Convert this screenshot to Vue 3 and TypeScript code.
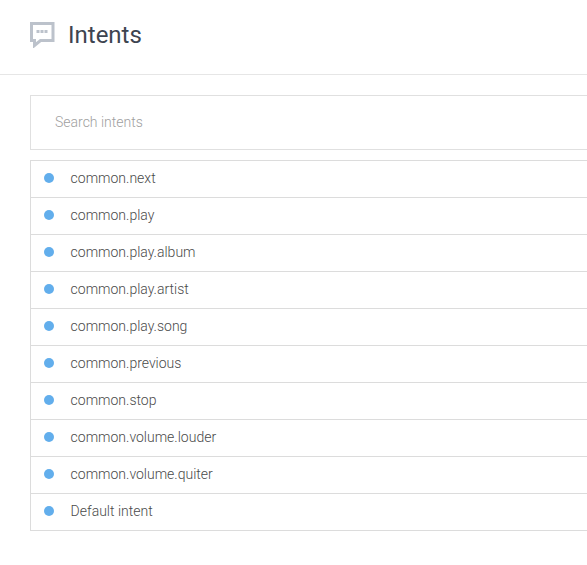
<script setup lang="ts">
const intents: string[] = [
  'common.next',
  'common.play',
  'common.play.album',
  'common.play.artist',
  'common.play.song',
  'common.previous',
  'common.stop',
  'common.volume.louder',
  'common.volume.quiter',
  'Default intent',
]
</script>

<template>
  <div class="page">
    <header class="header">
      <svg class="icon" width="26" height="26" viewBox="0 0 26 26" aria-hidden="true">
        <path d="M2.500 1.500H24V18.500H11.500L5.500 23.500V18.500H2.500Z" fill="none" stroke="#bcc2cb" stroke-width="3" stroke-linejoin="miter" />
        <rect x="7.500" y="8" width="3" height="3" fill="#bcc2cb" />
        <rect x="11.500" y="8" width="3" height="3" fill="#bcc2cb" />
        <rect x="15.500" y="8" width="3" height="3" fill="#bcc2cb" />
      </svg>
      <h1 class="title">Intents</h1>
    </header>
    <main class="content">
      <input class="search" type="text" placeholder="Search intents" />
      <ul class="list">
        <li v-for="intent in intents" :key="intent" class="row">
          <span class="dot"></span>
          <span class="name">{{ intent }}</span>
        </li>
      </ul>
    </main>
  </div>
</template>

<style>
html, body {
  margin: 0;
  overflow: hidden;
  background: #fff;
}
</style>

<style scoped>
.page {
  width: 587px;
  height: 565px;
  overflow: hidden;
  font-family: Roboto, sans-serif;
  color: #333a45;
}
.header {
  height: 75px;
  box-sizing: border-box;
  border-bottom: 1px solid #e6e6e6;
  padding-left: 29px;
  display: flex;
  align-items: center;
  padding-bottom: 4px;
  gap: 13px;
  width: 100%;
}
.icon {
  flex: none;
}
.title {
  margin: 0;
  font-size: 24px;
  font-weight: 400;
  line-height: 30px;
  color: #3d4450;
}
.content {
  padding: 20px 0 0 30px;
  width: 700px;
}
.search {
  display: block;
  width: 100%;
  box-sizing: border-box;
  height: 55px;
  border: 1px solid #e0e0e0;
  padding: 0 24px 2px;
  margin: 0 0 10px;
  font-family: inherit;
  font-size: 14px;
  font-weight: 300;
  outline: none;
  background: #fff;
}
.search::placeholder {
  color: #a0a0a0;
}
.list {
  list-style: none;
  margin: 0;
  padding: 0;
  border: 1px solid #dcdcdc;
  border-bottom: 0;
}
.row {
  height: 37px;
  box-sizing: border-box;
  border-bottom: 1px solid #dcdcdc;
  display: flex;
  align-items: center;
  padding-left: 13px;
  padding-bottom: 2px;
  font-size: 14px;
  font-weight: 300;
  color: #4a4a4a;
}
.dot {
  width: 10px;
  height: 10px;
  border-radius: 50%;
  background: #62aeec;
  margin-right: 16.6px;
  flex: none;
}
</style>
